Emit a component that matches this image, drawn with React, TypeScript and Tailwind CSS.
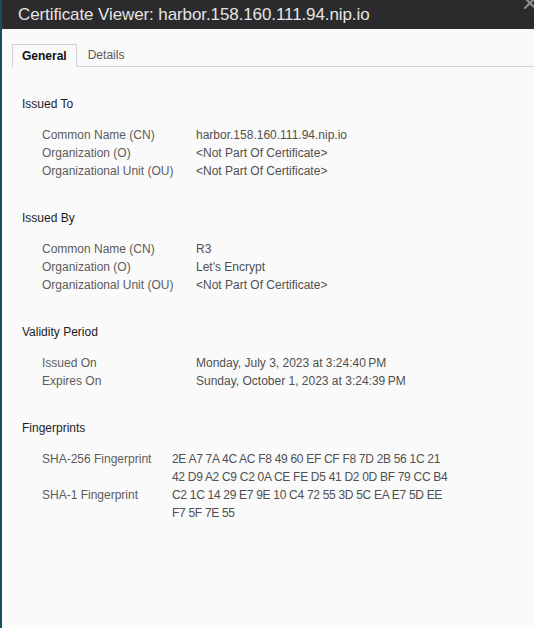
import React from 'react';

type Row = { label: string; value: React.ReactNode };

const font = { fontFamily: '"Liberation Sans", Arial, sans-serif' };

function Section({ title, rows, labelWidth }: { title: string; rows: Row[]; labelWidth: string }) {
    return (
        <div className="flex flex-col">
            <div className="text-[12px] leading-[18px] text-[#1c1c1c] pl-[20px]">{title}</div>
            <div className="flex flex-col mt-[13px] pl-[40px]">
                {rows.map((r) => (
                    <div key={r.label} className="flex text-[12px] leading-[18px]">
                        <div className={`${labelWidth} shrink-0 text-[#5c5c5c]`}>{r.label}</div>
                        <div className="text-[#505050]">{r.value}</div>
                    </div>
                ))}
            </div>
        </div>
    );
}

export default function App() {
    return (
        <div className="w-[534px] h-[628px] flex overflow-hidden" style={font}>
            <div className="w-[2px] shrink-0 bg-[#1d4a5c]" />
            <div className="flex-1 flex flex-col min-w-0">
                <div className="h-[29px] shrink-0 bg-[#2b2b2e] flex items-center pl-[16px] relative">
                    <span className="text-[17px] text-[#e4e4e4] tracking-[-0.1px] pt-[1px]">
                        Certificate Viewer: harbor.158.160.111.94.nip.io
                    </span>
                    {/* close button, mostly cut off by the window edge */}
                    <svg className="absolute right-[-3px] top-[-4px]" width="14" height="14" viewBox="0 0 14 14">
                        <path d="M2 2 L12 12 M12 2 L2 12" stroke="#8c8c90" strokeWidth="2.2" strokeLinecap="round" />
                    </svg>
                </div>
                <div className="flex-1 bg-[#fafafa] flex flex-col">
                    <div className="mt-[15px] ml-[10px] flex items-end border-b border-[#d2d2d2] h-[23px]">
                        <div className="h-[23px] px-[9px] border border-b-0 border-[#d2d2d2] bg-[#fafafa] -mb-px flex items-center text-[12px] font-bold text-[#111]">
                            General
                        </div>
                        <div className="h-[22px] px-[11px] flex items-center text-[12px] text-[#5a5a5a]">Details</div>
                    </div>
                    <div className="flex flex-col gap-[29px] mt-[28px]">
                        <Section
                            title="Issued To"
                            labelWidth="w-[154px]"
                            rows={[
                                { label: 'Common Name (CN)', value: 'harbor.158.160.111.94.nip.io' },
                                { label: 'Organization (O)', value: '<Not Part Of Certificate>' },
                                { label: 'Organizational Unit (OU)', value: '<Not Part Of Certificate>' },
                            ]}
                        />
                        <Section
                            title="Issued By"
                            labelWidth="w-[154px]"
                            rows={[
                                { label: 'Common Name (CN)', value: 'R3' },
                                { label: 'Organization (O)', value: "Let's Encrypt" },
                                { label: 'Organizational Unit (OU)', value: '<Not Part Of Certificate>' },
                            ]}
                        />
                        <Section
                            title="Validity Period"
                            labelWidth="w-[154px]"
                            rows={[
                                { label: 'Issued On', value: 'Monday, July 3, 2023 at 3:24:40\u2009PM' },
                                { label: 'Expires On', value: 'Sunday, October 1, 2023 at 3:24:39\u2009PM' },
                            ]}
                        />
                        <Section
                            title="Fingerprints"
                            labelWidth="w-[130px]"
                            rows={[
                                {
                                    label: 'SHA-256 Fingerprint',
                                    value: (
                                        <div className="tracking-[-0.3px]">
                                            <div>2E A7 7A 4C AC F8 49 60 EF CF F8 7D 2B 56 1C 21</div>
                                            <div>42 D9 A2 C9 C2 0A CE FE D5 41 D2 0D BF 79 CC B4</div>
                                        </div>
                                    ),
                                },
                                {
                                    label: 'SHA-1 Fingerprint',
                                    value: (
                                        <div className="tracking-[-0.3px]">
                                            <div>C2 1C 14 29 E7 9E 10 C4 72 55 3D 5C EA E7 5D EE</div>
                                            <div>F7 5F 7E 55</div>
                                        </div>
                                    ),
                                },
                            ]}
                        />
                    </div>
                </div>
            </div>
        </div>
    );
}
